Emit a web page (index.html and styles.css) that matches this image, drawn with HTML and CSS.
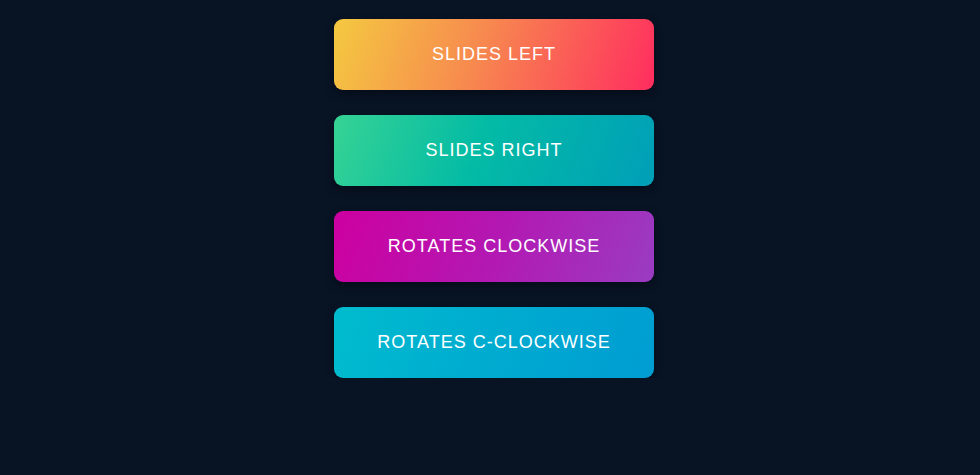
FILE: index.html
```html
<!DOCTYPE html>
<html lang="en">
<head>
    <meta charset="UTF-8">
    <meta name="viewport" content="width=device-width, initial-scale=1.0">
    <title>Buttons</title>
    <link rel="stylesheet" href="styles.css">
</head>
<body>
    <div class="container">
        <button class="btn slide-left">Slides Left</button>
        <button class="btn slide-right">Slides Right</button>
        <button class="btn rotate-cw">Rotates Clockwise</button>
        <button class="btn rotate-ccw">Rotates C-Clockwise</button>
    </div>
</body>
</html>
```

FILE: styles.css
```css
* {
    margin: 0;
    box-sizing: border-box;
}

body {
    background: #081324;
    font-family: 'Liberation Sans', Arial, sans-serif;
}

.container {
    display: flex;
    flex-direction: column;
    align-items: center;
    gap: 25px;
    padding: 19px 0 0 8px;
}

.btn {
    width: 320px;
    height: 71px;
    border: none;
    border-radius: 9px;
    color: white;
    font-family: inherit;
    font-size: 18px;
    letter-spacing: 1px;
    text-transform: uppercase;
    box-shadow: 0 4px 10px rgba(0, 0, 0, 0.35);
    cursor: pointer;
}

.slide-left {
    background: linear-gradient(110deg, #f4c940 0%, #f7894f 45%, #ff2d5f 100%);
}

.slide-right {
    background: linear-gradient(110deg, #36d394 0%, #03bba5 45%, #009fb8 100%);
}

.rotate-cw {
    background: linear-gradient(110deg, #cd00a0 0%, #b318b2 50%, #9a3cc2 100%);
}

.rotate-ccw {
    background: linear-gradient(110deg, #00bcce 0%, #00abd0 50%, #009dd2 100%);
}
```
